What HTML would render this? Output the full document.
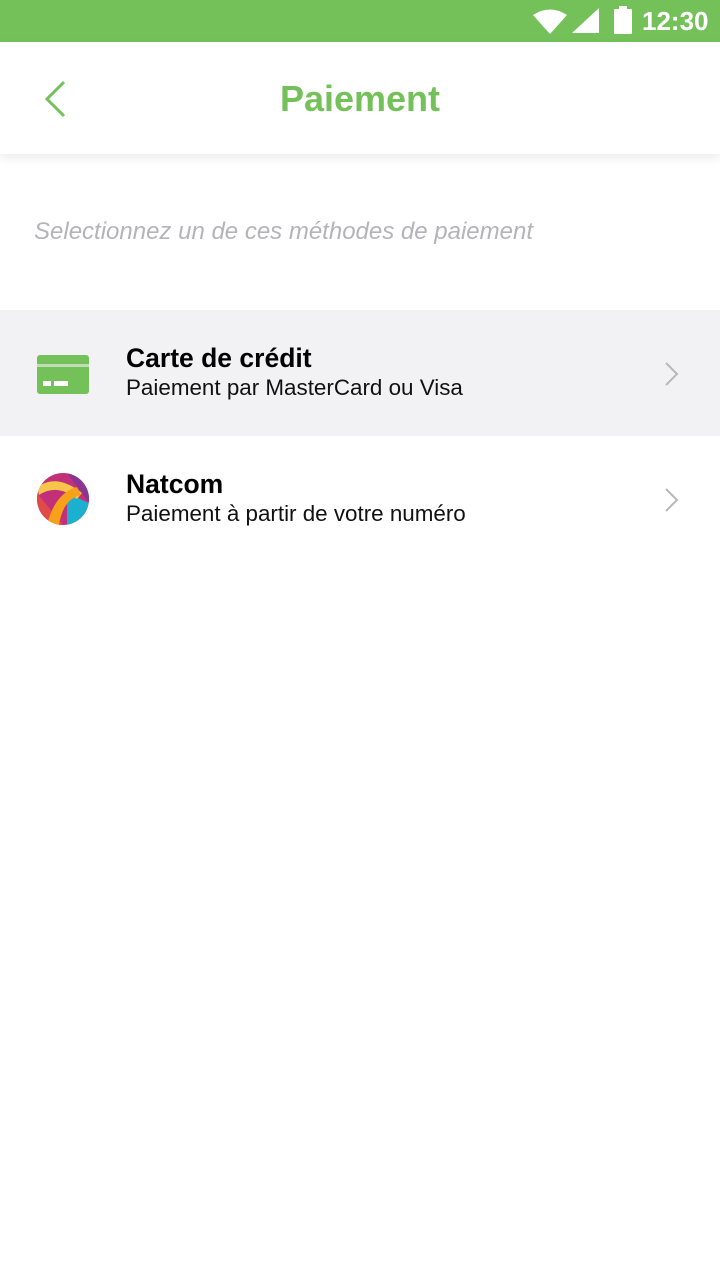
<!DOCTYPE html>
<html><head><style>
body{margin:0;width:720px;height:1280px;background:#fff;font-family:"Liberation Sans",sans-serif;position:relative;overflow:hidden}
.sb{position:absolute;top:0;left:0;width:720px;height:42px;background:#74c15a}
.hdr{position:absolute;top:42px;left:0;width:720px;height:112px;background:#fff;box-shadow:0 4px 10px rgba(0,0,0,0.08)}
.title{position:absolute;top:78px;width:720px;text-align:center;font-size:36px;color:#74c15a;font-weight:bold}
.hint{position:absolute;top:218px;left:34px;font-size:24px;font-style:italic;color:#b4b4b8}
.row{position:absolute;left:0;width:720px;height:126px}
.t1{position:absolute;left:126px;font-size:26.5px;font-weight:bold;color:#000}
.t2{position:absolute;left:126px;font-size:22.4px;color:#111}
</style></head><body>
<div class="sb">
<svg style="position:absolute;left:533px;top:9px" width="34" height="26"><path d="M0 6 Q17 -5 34 6 L17 25 Z" fill="#fff"/></svg>
<svg style="position:absolute;left:572px;top:8px" width="28" height="26"><path d="M0 25 L27 0 L27 25 Z" fill="#fff"/></svg>
<svg style="position:absolute;left:614px;top:6px" width="18" height="28"><rect x="5" y="0" width="8" height="3" fill="#fff"/><rect x="0" y="3" width="18" height="25" rx="1" fill="#fff"/></svg>
<div style="position:absolute;left:642px;top:6px;font-size:26px;color:#fff;font-weight:bold">12:30</div>
</div>
<div class="hdr">
<svg style="position:absolute;left:42px;top:38px" width="26" height="38"><path d="M22 2 L5 19 L22 36" stroke="#74c15a" stroke-width="3" fill="none"/></svg>
</div>
<div class="title">Paiement</div>
<div class="hint">Selectionnez un de ces méthodes de paiement</div>
<div class="row" style="top:310px;background:#f2f2f4">
<svg style="position:absolute;left:37px;top:45px" width="52" height="39"><rect width="52" height="39" rx="3" fill="#74c15a"/><rect y="9" width="52" height="3" fill="#f2f2f4" opacity="0.6"/><rect x="6" y="26" width="8" height="5" fill="#fff"/><rect x="17" y="26" width="14" height="5" fill="#fff"/></svg>
<div class="t1" style="top:33px">Carte de crédit</div>
<div class="t2" style="top:65px">Paiement par MasterCard ou Visa</div>
<svg style="position:absolute;left:664px;top:51px" width="16" height="26"><path d="M2 2 L13 13 L2 24" stroke="#b8b8bc" stroke-width="2" fill="none"/></svg>
</div>
<div class="row" style="top:436px">
<svg style="position:absolute;left:37px;top:37px" width="52" height="52" viewBox="0 0 52 52"><defs><clipPath id="c"><circle cx="26" cy="26" r="26"/></clipPath></defs><g clip-path="url(#c)"><rect width="52" height="52" fill="#c2307a"/><path d="M0 20 L26 52 L0 52Z" fill="#e04a4a"/><path d="M30 20 L52 30 L52 52 L30 52Z" fill="#1bb0cf"/><path d="M30 0 L52 0 L52 30Z" fill="#8a3590"/><path d="M0 14 Q20 0 45 20 L40 26 Q20 10 2 22Z" fill="#f7c54a"/><path d="M10 52 Q18 20 40 14 L44 22 Q26 26 22 52Z" fill="#f7a11a"/></g></svg>
<div class="t1" style="top:33px">Natcom</div>
<div class="t2" style="top:65px">Paiement à partir de votre numéro</div>
<svg style="position:absolute;left:664px;top:51px" width="16" height="26"><path d="M2 2 L13 13 L2 24" stroke="#b8b8bc" stroke-width="2" fill="none"/></svg>
</div>
</body></html>
